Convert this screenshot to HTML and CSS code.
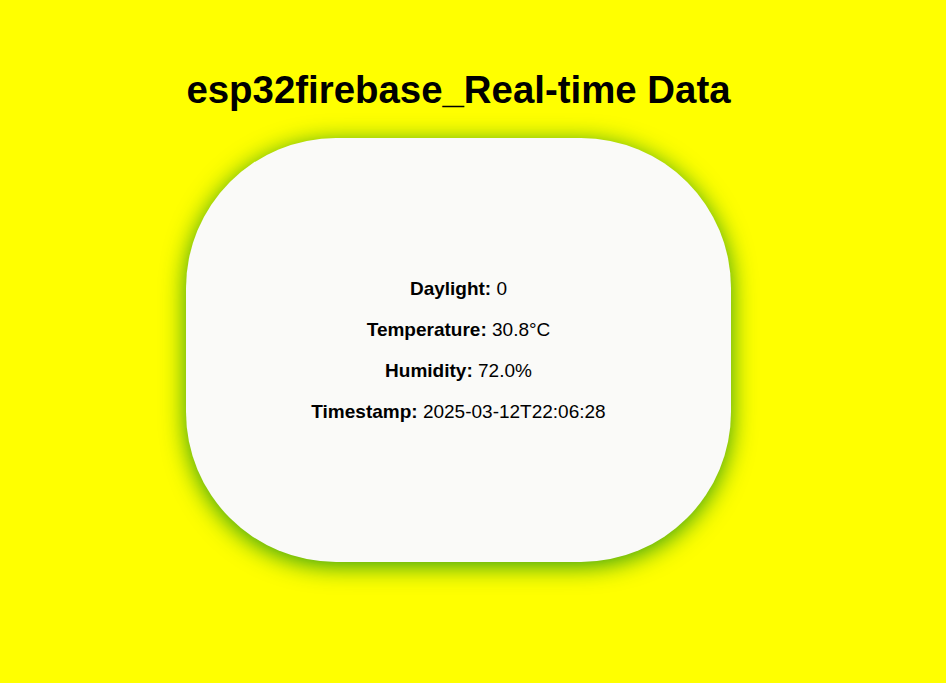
FILE: index.html
```html
<!DOCTYPE html>
<html>
<head>
<meta charset="utf-8">
<link rel="stylesheet" href="styles.css">
</head>
<body>
<div class="page">
  <h1 class="title">esp32firebase_Real-time Data</h1>
  <div class="card">
    <p class="row"><strong>Daylight:</strong> 0</p>
    <p class="row"><strong>Temperature:</strong> 30.8°C</p>
    <p class="row"><strong>Humidity:</strong> 72.0%</p>
    <p class="row"><strong>Timestamp:</strong> 2025-03-12T22:06:28</p>
  </div>
</div>
</body>
</html>
```
FILE: styles.css
```css
html, body {
  margin: 0;
  padding: 0;
  background: #ffff00;
  font-family: "Liberation Sans", Arial, sans-serif;
  color: #000;
}
.page {
  width: 917px;
  padding-top: 68px;
  padding-bottom: 40px;
  display: flex;
  flex-direction: column;
  align-items: center;
}
.title {
  margin: 0 0 26px;
  font-size: 38.4px;
  font-weight: bold;
  line-height: 44px;
}
.card {
  width: 545px;
  height: 424px;
  box-sizing: border-box;
  background: #fafaf8;
  border-radius: 150px;
  box-shadow: 0 4px 24px rgba(10, 140, 20, 0.85);
  display: flex;
  flex-direction: column;
  align-items: center;
  justify-content: center;
}
.row {
  margin: 9.5px 0;
  font-size: 19px;
  line-height: 22px;
}
```
